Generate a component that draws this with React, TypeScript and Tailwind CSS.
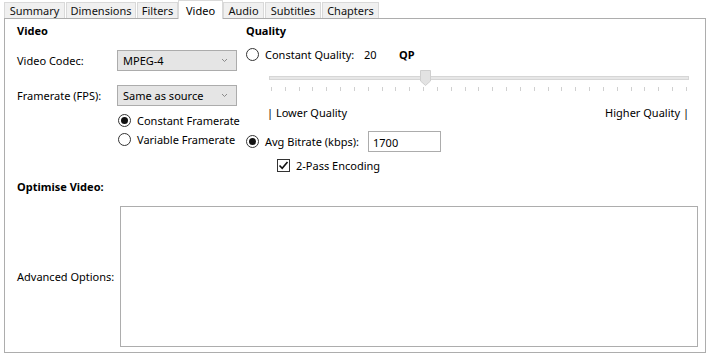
import React from 'react';

const tabs: { name: string; w: string; gap: string }[] = [
  { name: 'Summary', w: 'w-[61px]', gap: 'mr-[1px]' },
  { name: 'Dimensions', w: 'w-[70px]', gap: 'mr-[1px]' },
  { name: 'Filters', w: 'w-[41px]', gap: 'mr-0' },
  { name: 'Video', w: 'w-[45px]', gap: 'mr-0' },
  { name: 'Audio', w: 'w-[41px]', gap: 'mr-[1px]' },
  { name: 'Subtitles', w: 'w-[56px]', gap: 'mr-[1px]' },
  { name: 'Chapters', w: 'w-[57px]', gap: 'mr-0' },
];

function Chevron() {
  return (
    <svg width="7" height="5" viewBox="0 0 7 5" className="mr-[8px]">
      <path d="M1 1 L3.5 3.5 L6 1" fill="none" stroke="#8a8a8a" strokeWidth="1" />
    </svg>
  );
}

function Select({ value }: { value: string }) {
  return (
    <div className="w-[120px] h-[21px] bg-[#e5e5e5] border border-[#acacac] flex items-center justify-between pl-[5px]">
      <span>{value}</span>
      <Chevron />
    </div>
  );
}

function Radio({ checked }: { checked?: boolean }) {
  return (
    <div className="w-[13px] h-[13px] rounded-full border border-[#333] bg-white flex items-center justify-center shrink-0">
      {checked && <div className="w-[7px] h-[7px] rounded-full bg-[#111]" />}
    </div>
  );
}

function Slider() {
  const ticks = Array.from({ length: 31 }, (_, i) => i);
  return (
    <div className="relative w-[420px] h-[22px] ml-[23px] mt-[7px]">
      <div className="absolute left-0 right-0 top-[7px] h-[4px] bg-[#e7e7e7] border border-[#d6d6d6]" />
      <svg className="absolute left-[151px] top-[1px]" width="11" height="16" viewBox="0 0 11 16">
        <path d="M0.5 0.5 H10.5 V11 L5.5 15.5 L0.5 11 Z" fill="#e3e3e3" stroke="#cfcfcf" />
      </svg>
      <div className="absolute left-[2px] right-[2px] top-[18px] flex justify-between">
        {ticks.map((t) => (
          <div key={t} className="w-px h-[4px] bg-[#d0d0d0]" />
        ))}
      </div>
    </div>
  );
}

export default function App() {
  return (
    <div
      className="w-[713px] h-[360px] bg-white text-[11px] text-[#000] leading-none whitespace-nowrap"
      style={{ fontFamily: '"Noto Sans", "Open Sans", sans-serif' }}
    >
      {/* Tabs */}
      <div className="flex items-end h-[18px] pl-[4px]">
        {tabs.map((t) =>
          t.name === 'Video' ? (
            <div
              key={t.name}
              className={`${t.w} ${t.gap} h-[19px] -mb-px z-10 bg-white border border-b-0 border-[#d9d9d9] flex items-center justify-center`}
            >
              {t.name}
            </div>
          ) : (
            <div
              key={t.name}
              className={`${t.w} ${t.gap} h-[16px] bg-[#f0f0f0] border border-b-0 border-[#d9d9d9] flex items-center justify-center text-[#111]`}
            >
              {t.name}
            </div>
          )
        )}
      </div>

      {/* Panel */}
      <div className="ml-[4px] w-[702px] h-[335px] border border-[#adadad] bg-white pl-[12px] pt-[2px]">
        <div className="flex">
          {/* Left column */}
          <div className="w-[229px]">
            <div className="h-[18px] flex items-center font-bold">Video</div>
            <div className="mt-[11px] h-[21px] flex items-center">
              <span className="w-[100px]">Video Codec:</span>
              <Select value="MPEG-4" />
            </div>
            <div className="mt-[14px] h-[21px] flex items-center">
              <span className="w-[100px]">Framerate (FPS):</span>
              <Select value="Same as source" />
            </div>
            <div className="mt-[6px] h-[16px] flex items-center gap-[6px] ml-[101px]">
              <Radio checked />
              <span>Constant Framerate</span>
            </div>
            <div className="mt-[3px] h-[16px] flex items-center gap-[6px] ml-[101px]">
              <Radio />
              <span>Variable Framerate</span>
            </div>
          </div>

          {/* Right column */}
          <div className="flex-1">
            <div className="h-[18px] flex items-center font-bold">Quality</div>
            <div className="mt-[7px] h-[16px] flex items-center">
              <Radio />
              <span className="ml-[6px] w-[99px]">Constant Quality:</span>
              <span className="w-[35px]">20</span>
              <span className="font-bold">QP</span>
            </div>
            <Slider />
            <div className="mt-[13px] h-[16px] w-[443px] pl-[21px] flex items-center justify-between">
              <span>| Lower Quality</span>
              <span>Higher Quality |</span>
            </div>
            <div className="mt-[11px] h-[21px] flex items-center">
              <Radio checked />
              <span className="ml-[6px] w-[103px]">Avg Bitrate (kbps):</span>
              <div className="w-[73px] h-[21px] border border-[#acacac] flex items-center pl-[4px] pt-[2px]">
                1700
              </div>
            </div>
            <div className="mt-[5px] h-[16px] flex items-center ml-[31px] gap-[6px]">
              <div className="w-[13px] h-[13px] border border-[#333] bg-white flex items-center justify-center">
                <svg width="11" height="11" viewBox="0 0 11 11">
                  <path d="M1.5 5.5 L4.2 8.3 L9.5 2" fill="none" stroke="#111" strokeWidth="1.6" />
                </svg>
              </div>
              <span>2-Pass Encoding</span>
            </div>
          </div>
        </div>

        <div className="mt-[4px] h-[18px] flex items-center font-bold">Optimise Video:</div>

        <div className="mt-[11px] flex items-center">
          <span className="w-[103px]">Advanced Options:</span>
          <div className="w-[578px] h-[141px] border border-[#adadad] bg-white" />
        </div>
      </div>
    </div>
  );
}
